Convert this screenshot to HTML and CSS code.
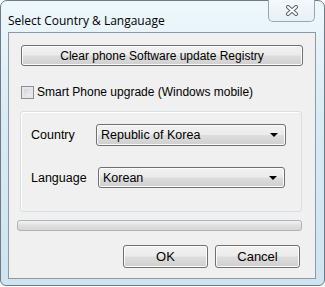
FILE: index.html
```html
<html>
    <head>
        <meta charset="UTF-8">
        <title>Select Country &amp; Langauage</title>
        <link rel="stylesheet" href="styles.css">
    </head>
    <body>
        <div class="window">
            <div class="titlebar">
                <span class="title">Select Country &amp; Langauage</span>
                <div class="close">
                    <svg width="14" height="11" viewBox="0 0 14 11">
                        <path d="M3 2 L11 9 M11 2 L3 9" stroke="#5a6470" stroke-width="4" stroke-linecap="round"/>
                        <path d="M3 2 L11 9 M11 2 L3 9" stroke="#ffffff" stroke-width="2" stroke-linecap="round"/>
                    </svg>
                </div>
            </div>

            <div class="client">
                <button class="btn wide">Clear phone Software update Registry</button>

                <label class="check">
                    <span class="box"></span>
                    Smart Phone upgrade (Windows mobile)
                </label>

                <div class="group">
                    <div class="row">
                        <span class="lbl">Country</span>
                        <div class="combo c1">Republic of Korea<span class="arrow"></span></div>
                    </div>
                    <div class="row r2">
                        <span class="lbl">Language</span>
                        <div class="combo c2">Korean<span class="arrow"></span></div>
                    </div>
                </div>

                <div class="progress"></div>

                <div class="actions">
                    <button class="btn action">OK</button>
                    <button class="btn action">Cancel</button>
                </div>
            </div>
        </div>
    </body>
</html>
```

FILE: styles.css
```css
/* win7 style dialog */
html, body{
  margin:0;
  padding:0;
}
body {
    font-family: 'Liberation Sans', Arial, sans-serif;
    font-size: 12px;
    background:#ffffff;
    width:325px;
    height:287px;
    overflow:hidden;
}

.window{
  box-sizing:border-box;
  width:325px;
  height:286px;
  border:1px solid #6f7a84;
  border-radius:7px 7px 6px 6px;
  background:linear-gradient(180deg, #eef8fc 0%, #d9ebf5 40%, #cfe4f1 100%);
  display:flex;
  flex-direction:column;
}

.titlebar{
  height:31px;
  display:flex;
  justify-content:space-between;
  align-items:flex-start;
}
.title{
  font-family:'Open Sans', 'Noto Sans', sans-serif;
  font-size:12px;
  color:#000;
  margin:11px 0 0 7px;
}
.close{
  width:45px;
  height:21px;
  margin:-1px 9px 0 0;
  border:1px solid #9aa5ae;
  border-top:none;
  border-radius:0 0 5px 5px;
  background:linear-gradient(180deg, #f4f9fc, #e6f0f6);
  display:flex;
  justify-content:center;
  align-items:center;
}

.client{
  box-sizing:border-box;
  width:308px;
  height:247px;
  margin-left:7px;
  border:1px solid #8d9aa5;
  background:#f0f0f0;
  padding:12px 12px 0 12px;
  display:flex;
  flex-direction:column;
}

.btn{
  font-family:'Liberation Sans', Arial, sans-serif;
  font-size:12px;
  color:#000;
  border:1px solid #707070;
  border-radius:3px;
  background:linear-gradient(180deg, #f2f2f2 0%, #ebebeb 48%, #dddddd 52%, #cfcfcf 100%);
  box-shadow:inset 0 0 0 1px #fbfbfb;
  padding:0;
}
.wide{
  height:21px;
  width:282px;
}

.check{
  display:flex;
  align-items:center;
  margin:19px 0 0 0;
  font-size:12px;
  height:14px;
}
.box{
  width:11px;
  height:11px;
  border:1px solid #8e8f8f;
  background:linear-gradient(135deg, #cbcfd5, #f6f6f6);
  box-shadow:inset 0 0 0 2px #e4e6e8;
  margin-right:3px;
}

.group{
  box-sizing:border-box;
  width:282px;
  height:101px;
  margin:12px 0 0 -1px;
  border:1px solid #d5dfe5;
  border-radius:3px;
  box-shadow:inset 1px 1px 0 #ffffff;
  padding:12px 0 0 10px;
}
.row{
  display:flex;
  align-items:center;
}
.r2{
  margin-top:21px;
}
.lbl{
  width:65px;
  font-size:12.5px;
}
.combo{
  box-sizing:border-box;
  height:22px;
  border:1px solid #707070;
  border-radius:3px;
  background:linear-gradient(180deg, #f2f2f2 0%, #ebebeb 48%, #dddddd 52%, #cfcfcf 100%);
  box-shadow:inset 0 0 0 1px #fbfbfb;
  padding:0 0 0 4px;
  font-size:12.5px;
  display:flex;
  align-items:center;
  justify-content:space-between;
}
.c1{
  width:190px;
}
.c2{
  width:187px;
  height:21px;
  margin-left:2px;
}
.arrow{
  width:0;
  height:0;
  border-left:4px solid transparent;
  border-right:4px solid transparent;
  border-top:4px solid #000;
  margin-right:7px;
}

.progress{
  box-sizing:border-box;
  width:285px;
  height:11px;
  margin:8px 0 0 -4px;
  border:1px solid #b2b2b2;
  border-radius:3px;
  background:linear-gradient(180deg, #f3f3f3 0%, #e0e0e0 50%, #d6d6d6 100%);
}

.actions{
  display:flex;
  justify-content:flex-end;
  gap:7px;
  margin:14px 3px 0 0;
}
.action{
  width:85px;
  height:23px;
  font-size:13px;
}
```
